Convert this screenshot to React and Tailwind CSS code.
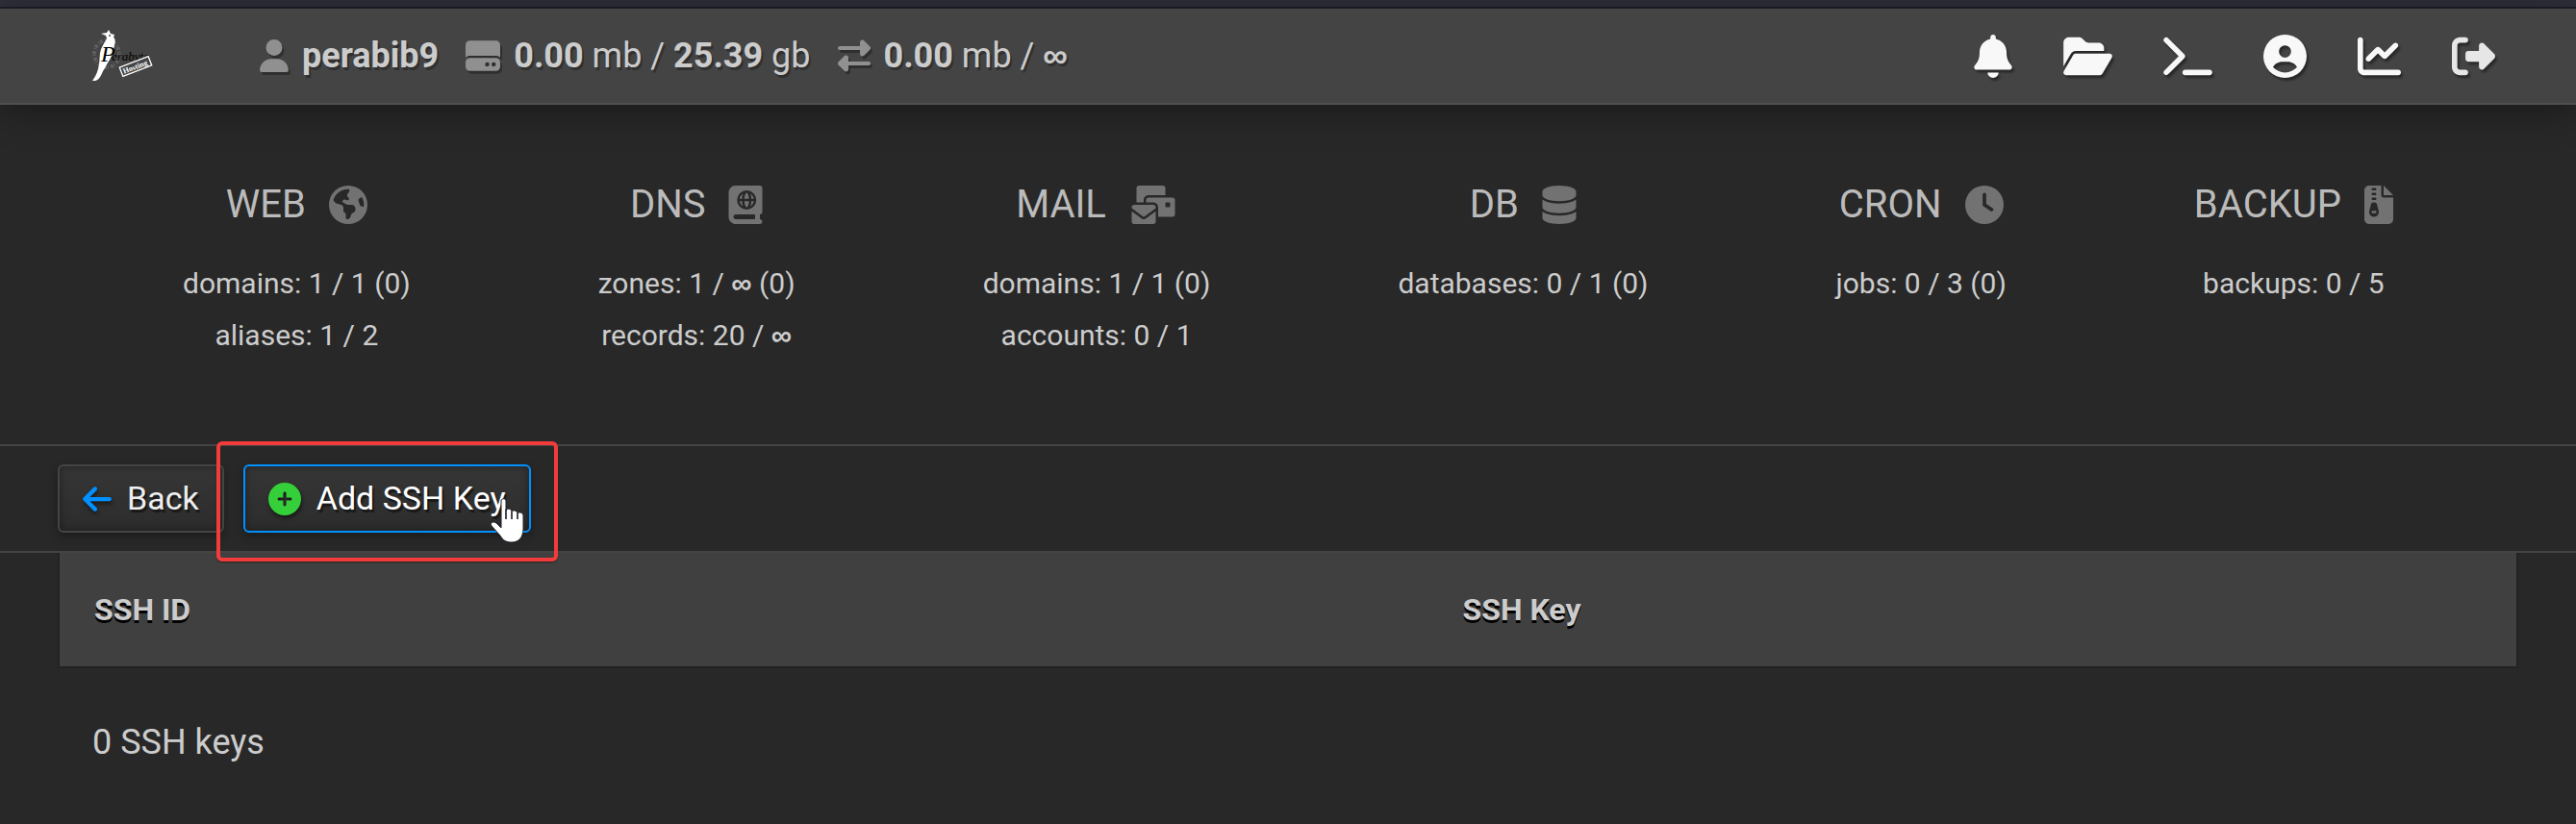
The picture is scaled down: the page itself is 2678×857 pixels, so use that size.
import {
  FaUser, FaHardDrive, FaBell, FaFolderOpen, FaTerminal, FaCircleUser, FaChartLine, FaRightFromBracket,
  FaEarthAmericas, FaBookAtlas, FaEnvelopesBulk, FaDatabase, FaClock, FaFileZipper, FaArrowLeft, FaCirclePlus,
} from 'react-icons/fa6';

const menu = [
  { label: 'Notifications', Icon: FaBell, size: 'w-10' },
  { label: 'File manager', Icon: FaFolderOpen, size: 'w-[51px]' },
  { label: 'Web terminal', Icon: FaTerminal, size: 'w-[51px]' },
  { label: 'Account', Icon: FaCircleUser, size: 'w-[45px]' },
  { label: 'Statistics', Icon: FaChartLine, size: 'w-[45px]' },
  { label: 'Log out', Icon: FaRightFromBracket, size: 'w-[45px]', dim: true },
];

const Inf = () => <b className="font-['Liberation_Sans',sans-serif] font-bold">∞</b>;

const stats = [
  { title: 'WEB', Icon: FaEarthAmericas, size: 'w-10', rows: ['domains: 1 / 1 (0)', 'aliases: 1 / 2'] },
  { title: 'DNS', Icon: FaBookAtlas, size: 'w-9', rows: [<>zones: 1 / <Inf /> (0)</>, <>records: 20 / <Inf /></>] },
  { title: 'MAIL', Icon: FaEnvelopesBulk, size: 'w-[50px]', rows: ['domains: 1 / 1 (0)', 'accounts: 0 / 1'] },
  { title: 'DB', Icon: FaDatabase, size: 'w-9', rows: ['databases: 0 / 1 (0)'] },
  { title: 'CRON', Icon: FaClock, size: 'w-10', rows: ['jobs: 0 / 3 (0)'] },
  { title: 'BACKUP', Icon: FaFileZipper, size: 'w-[30px]', rows: ['backups: 0 / 5'] },
];

function Logo() {
  return (
    <svg viewBox="0 0 64 54" className="h-[54px] w-16 overflow-visible">
      <ellipse cx="15" cy="25" rx="13" ry="14" fill="none" stroke="#606060" strokeWidth="4" strokeDasharray="3 2 1 1" />
      <path d="M17 0l2 4 4 1-1 3c2 1 2 5 1 8-1 8-4 14-8 20-1 2-2 4-4 7-2 5-4 9-8 10H0c4-5 6-11 7-17 1-6 0-12 3-18 2-4 4-7 5-9l-1-3-5-2 6-1z" fill="#fff" />
      <circle cx="18" cy="6" r="1" fill="#444" />
      <text x="9" y="33" fontSize="24" fill="#000" className="font-['Liberation_Serif',serif] italic">P</text>
      <text x="20" y="32" fontSize="13" fill="#000" className="font-['Liberation_Serif',serif] italic">erabyte</text>
      <g transform="rotate(-21 45 38)">
        <rect x="29" y="33" width="32" height="10" fill="#444" stroke="#fff" strokeWidth="1.3" />
        <text x="31" y="41" fontSize="8" fill="#fff" className="font-['Liberation_Serif',serif] font-bold">Hosting</text>
      </g>
    </svg>
  );
}

function Swap() {
  return (
    <svg viewBox="0 0 34 34" fill="currentColor" className="h-[34px] w-[34px] text-[#909090] drop-shadow-[2px_3px_0_rgba(0,0,0,0.3)]">
      <path d="M2 7h21V3c0-2 2-3 4-2l7 7c1 1 1 1 0 2l-7 7c-2 1-4 0-4-2v-4H2a2 2 0 0 1 0-4zM32 23H11v-4c0-2-2-3-4-2l-7 7c-1 1-1 1 0 2l7 7c2 1 4 0 4-2v-4h21a2 2 0 0 0 0-4z" />
    </svg>
  );
}

function HandCursor() {
  return (
    <svg viewBox="0 0 34 48" className="pointer-events-none absolute right-2 -bottom-3 h-12 w-[34px]">
      <path
        d="M11 3c0-3 5-3 5 0v10c1-3 6-2 6 1 1-2 6-1 6 2 1-2 6-1 6 2v14c0 9-5 14-12 14-6 0-9-2-12-7L1 29c-2-4 2-5 5-3l5 5z"
        fill="#fff"
        stroke="#1c1c2a"
        strokeWidth="1"
      />
      <path d="M16 12v10M22 14v8M28 16v6" stroke="#1c1c2a" strokeWidth="1.6" />
    </svg>
  );
}

const btn = 'flex h-[71px] items-center gap-4 rounded-md border-2 bg-linear-to-b from-[#363636] to-[#2c2c2c] px-6 text-[34px] shadow-[0_4px_10px_rgba(0,0,0,0.3),inset_0_0_8px_rgba(0,0,0,0.4)] text-shadow-[2px_3px_1px_rgba(0,0,0,0.5)]';

export default function App() {
  return (
    <div className="min-h-screen bg-[#282828] font-[Roboto,sans-serif] text-[#ccc]">
      <div className="h-[9px] border-b-2 border-[#1e1e2a] bg-[#30303c]" />

      <header className="flex h-[100px] items-center justify-between border-b-2 border-[#505050] bg-[#444] pr-[84px] pl-24 shadow-[0_4px_40px_rgba(0,0,0,0.4)]">
        <div className="flex items-center text-4xl">
          <a href="#home" aria-label="Home" className="mr-[110px]"><Logo /></a>
          <div className="flex items-center gap-7 text-shadow-[2px_3px_0_rgba(0,0,0,0.3)]">
            <div className="flex items-center gap-[14px]">
              <FaUser className="h-[34px] w-[30px] text-[#909090] drop-shadow-[2px_3px_0_rgba(0,0,0,0.3)]" />
              <b>perabib9</b>
            </div>
            <div className="flex items-center gap-[14px]">
              <FaHardDrive className="h-9 w-9 text-[#909090] drop-shadow-[2px_3px_0_rgba(0,0,0,0.3)]" />
              <span><b>0.00</b> mb / <b>25.39</b> gb</span>
            </div>
            <div className="flex items-center gap-[14px]">
              <Swap />
              <span><b>0.00</b> mb / <Inf /></span>
            </div>
          </div>
        </div>

        <nav className="flex items-center gap-[53px]">
          {menu.map(({ label, Icon, size, dim }) => (
            <a key={label} href="#menu" aria-label={label} className={dim ? 'text-[#e6e6e6]' : 'text-[#f8f8f8]'}>
              <Icon className={`h-[45px] drop-shadow-[2px_3px_1px_rgba(0,0,0,0.4)] ${size}`} />
            </a>
          ))}
        </nav>
      </header>

      <section className="flex h-[353px] justify-between px-[190px] pt-[77px]">
        {stats.map(({ title, Icon, size, rows }) => (
          <a key={title} href="#stats" className="text-center">
            <h2 className="flex h-[54px] items-center justify-center gap-6 text-[40px] text-[#bbb]">
              {title}
              <Icon className={`h-10 text-[#727272] ${size}`} />
            </h2>
            <ul className="mt-7 text-3xl leading-[54px]">
              {rows.map((row, i) => <li key={i}>{row}</li>)}
            </ul>
          </a>
        ))}
      </section>

      <div className="flex h-[113px] items-center border-y-2 border-[#444] px-[60px]">
        <div className="flex gap-5">
          <button className={`${btn} border-[#444] text-[#eee]`}>
            <FaArrowLeft className="h-[34px] w-[30px] text-[#0090ff] drop-shadow-[1px_3px_2px_rgba(0,0,0,0.5)]" />
            Back
          </button>
          <div className="relative">
            <button className={`${btn} border-[#0090ff] text-white`}>
              <FaCirclePlus className="h-[34px] w-[34px] text-[#35cf3a] drop-shadow-[1px_3px_2px_rgba(0,0,0,0.5)]" />
              Add SSH Key
            </button>
            <div className="pointer-events-none absolute -inset-x-7 -top-6 -bottom-[30px] rounded-md border-4 border-[#f43b3b] shadow-[0_1px_1px_#222]" />
            <HandCursor />
          </div>
        </div>
      </div>

      <main className="px-[60px]">
        <table className="w-full table-fixed border-separate border-spacing-0 text-left">
          <thead className="bg-[#404040] text-[32px] text-shadow-[0_3px_0_#000]">
            <tr className="h-[120px]">
              <th className="w-[56%] border-b-2 border-l-2 border-[#222] pl-9">SSH ID</th>
              <th className="border-r-2 border-b-2 border-[#222] pl-7">SSH Key</th>
            </tr>
          </thead>
        </table>
        <p className="px-9 pt-[50px] text-4xl leading-[54px]">0 SSH keys</p>
      </main>
    </div>
  );
}
